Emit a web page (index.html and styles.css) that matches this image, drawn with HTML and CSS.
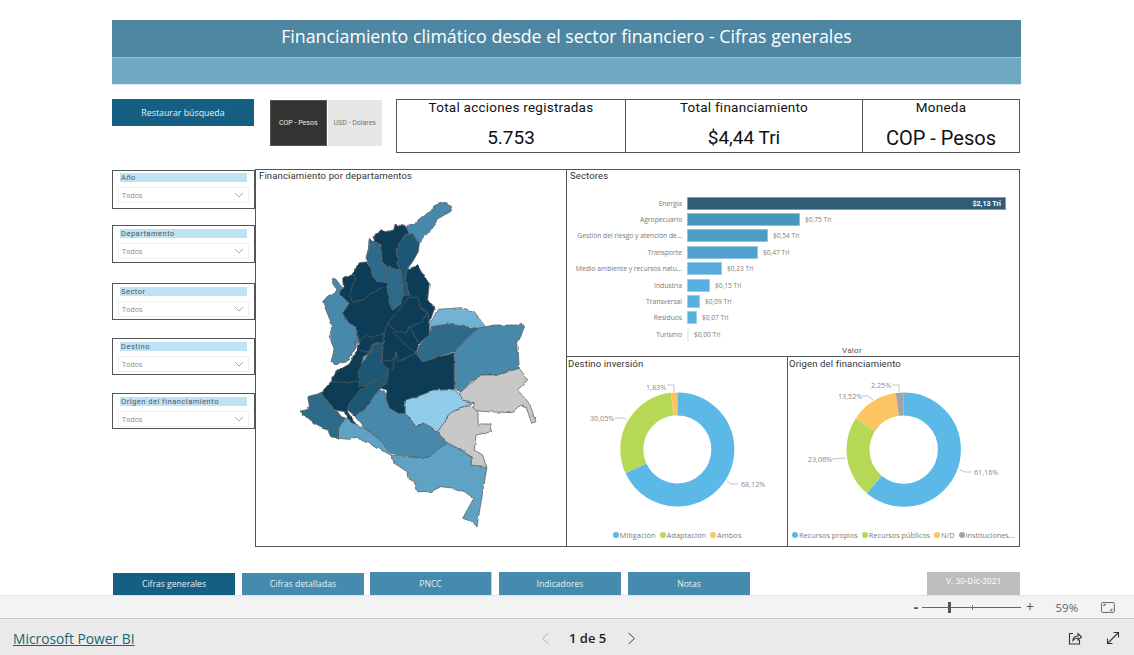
FILE: index.html
```html
<!DOCTYPE html>
<html lang="es">
<head>
<meta charset="utf-8">
<title>Financiamiento climático</title>
<link rel="stylesheet" href="styles.css">
</head>
<body>
<div class="report">
  <header class="banner">
    <h1 class="banner-title">Financiamiento climático desde el sector financiero - Cifras generales</h1>
    <div class="banner-sub"></div>
  </header>

  <section class="controls">
    <button class="reset">Restaurar búsqueda</button>
    <div class="toggle">
      <span class="toggle-on">COP - Pesos</span>
      <span class="toggle-off">USD - Dolares</span>
    </div>
    <div class="kpis">
      <div class="kpi kpi-a"><div class="kpi-label">Total acciones registradas</div><div class="kpi-value">5.753</div></div>
      <div class="kpi kpi-b"><div class="kpi-label">Total financiamiento</div><div class="kpi-value">$4,44 Tri</div></div>
      <div class="kpi kpi-c"><div class="kpi-label">Moneda</div><div class="kpi-value kpi-big">COP - Pesos</div></div>
    </div>
  </section>

  <main class="main">
    <aside class="slicers">
      <div class="slicer s1"><div class="slicer-head">Año</div><div class="slicer-box"><span>Todos</span><svg class="chev" width="10" height="6" viewBox="0 0 10 6"><polyline points="1,1 5,5 9,1"/></svg></div></div>
      <div class="slicer s2"><div class="slicer-head">Departamento</div><div class="slicer-box"><span>Todos</span><svg class="chev" width="10" height="6" viewBox="0 0 10 6"><polyline points="1,1 5,5 9,1"/></svg></div></div>
      <div class="slicer s3"><div class="slicer-head">Sector</div><div class="slicer-box"><span>Todos</span><svg class="chev" width="10" height="6" viewBox="0 0 10 6"><polyline points="1,1 5,5 9,1"/></svg></div></div>
      <div class="slicer s3"><div class="slicer-head">Destino</div><div class="slicer-box"><span>Todos</span><svg class="chev" width="10" height="6" viewBox="0 0 10 6"><polyline points="1,1 5,5 9,1"/></svg></div></div>
      <div class="slicer s4"><div class="slicer-head">Origen del financiamiento</div><div class="slicer-box"><span>Todos</span><svg class="chev" width="10" height="6" viewBox="0 0 10 6"><polyline points="1,1 5,5 9,1"/></svg></div></div>
    </aside>

    <div class="board">
      <section class="map-panel">
        <div class="panel-title">Financiamiento por departamentos</div>
        <svg class="map" viewBox="-75 15 933 1080" width="311" height="360">
          <defs>
            <filter id="rough" x="-5%" y="-5%" width="110%" height="110%">
              <feTurbulence type="fractalNoise" baseFrequency="0.05" numOctaves="2" seed="4"/>
              <feDisplacementMap in="SourceGraphic" scale="9" xChannelSelector="R" yChannelSelector="G"/>
            </filter>
          </defs>
          <g class="rough">
          <g class="dep">
            <polygon class="c-mid" points="373,140 400,128 430,105 455,90 458,78 485,68 510,78 515,92 490,105 468,118 462,135 440,160 415,190 400,170 385,160"/>
            <polygon class="c-mid" points="155,295 165,298 185,325 175,340 205,370 185,400 205,430 225,440 235,480 215,515 205,540 165,552 150,545 160,510 145,470 155,440 130,378 125,365 140,348 170,335 155,310"/>
            <polygon class="c-dark" points="280,165 303,148 312,155 338,150 342,133 373,140 385,160 372,165 345,210 350,238 345,242 358,270 320,262 303,245 300,195 280,190"/>
            <polygon class="c-dark" points="175,340 187,325 185,295 215,280 235,248 258,245 270,265 275,290 290,305 318,305 318,320 325,365 335,390 355,375 365,345 385,345 372,300 378,268 385,265 410,257 430,290 445,310 440,360 462,382 445,430 445,465 415,490 405,520 425,545 520,518 520,628 460,632 375,660 372,700 355,702 325,685 315,655 318,630 298,625 240,640 205,670 200,695 225,735 205,735 190,695 160,690 120,638 150,605 165,575 205,552 225,515 235,480 225,440 205,430 185,400 205,370"/>
            <polygon class="c-deep" points="372,165 395,160 400,172 415,190 412,215 395,245 378,268 372,300 385,345 368,345 358,270 345,242 350,238 345,210"/>
            <polygon class="c-steel" points="265,175 280,190 300,197 303,245 318,270 318,305 290,305 275,290 270,265 255,235 262,205"/>
            <polygon class="c-steel" points="303,245 320,262 358,270 368,345 355,375 335,390 325,365 318,320 318,270"/>
            <polygon class="c-pale" points="245,530 265,520 258,556 246,556"/>
            <polygon class="c-deep" points="232,570 250,545 275,495 308,487 303,545 325,572 300,595 262,610 235,620"/>
            <polygon class="c-deep" points="238,630 262,612 300,598 322,575 320,605 298,625 255,682 222,708 200,690 205,670"/>
            <polygon class="c-steel" points="450,440 500,432 590,445 555,478 520,515 425,545 405,520 420,488 445,465"/>
            <polygon class="c-sky" points="445,435 470,388 540,383 580,395 615,443 590,445 500,432 450,440"/>
            <polygon class="c-mid" points="590,445 640,435 700,435 725,430 730,445 710,490 715,565 650,585 600,585 570,605 540,635 520,628 520,518 555,478"/>
            <polygon class="c-light" points="373,660 410,650 460,630 520,630 540,645 545,660 582,668 540,682 510,695 495,720 490,735 468,755 430,728 405,740 385,715 373,700"/>
            <polygon class="c-gray" points="535,640 575,605 600,585 650,585 715,565 740,600 710,630 745,670 765,725 752,730 735,680 720,675 700,695 690,698 620,695 575,692 580,668 545,660"/>
            <polygon class="c-gray" points="470,755 495,720 510,695 540,682 570,678 590,695 592,732 625,732 632,755 585,765 580,810 605,825 617,860 570,855 570,830 530,805 495,785"/>
            <polygon class="c-pale" points="330,825 400,832 440,832 465,815 495,788 530,805 570,830 570,855 618,862 588,1038 565,1022 545,1015 578,955 550,935 520,925 480,920 450,935 410,935 400,905 380,895 378,875 340,850"/>
            <polygon class="c-mid" points="222,710 255,682 295,628 315,640 315,655 325,685 355,702 372,700 385,715 405,740 430,728 468,755 495,788 465,815 440,832 400,832 330,820 310,795 290,775 250,745"/>
            <polygon class="c-pale" points="172,745 190,715 200,715 222,735 250,745 290,775 310,795 330,825 270,795 225,772 205,778 172,775"/>
            <polygon class="c-steel" points="58,695 85,680 80,650 120,638 160,690 190,715 172,745 172,772 150,772 140,750 100,730"/>
          </g>
          <g class="borders">
            <polyline points="205,340 225,295 215,280"/>
            <polyline points="205,345 215,365 245,360 270,340 305,322"/>
            <polyline points="320,430 350,395 385,348 410,350 420,385 440,395 425,425 385,440 375,460 345,450 320,430"/>
            <polyline points="320,430 310,460 275,470 260,465 240,480 218,490 235,510 270,520 275,495 310,485 310,460"/>
            <polyline points="335,455 370,490 380,500 405,520"/>
            <polyline points="310,485 300,545 335,540 345,515 350,545 385,530 405,520"/>
            <polyline points="385,440 415,490"/>
            <polyline points="440,395 445,430"/>
            <polyline points="150,605 205,608 235,600"/>
            <polyline points="335,570 345,515"/>
            <polyline points="280,165 280,190"/>
          </g>
          </g>
        </svg>
      </section>

      <div class="right">
        <section class="sectors">
          <div class="panel-title">Sectores</div>
          <div class="bars">
            <div class="bar-row"><span class="bar-label">Energía</span><div class="bar-track"><div class="bar bar-1" style="width:319px"><span class="bar-in">$2,13 Tri</span></div></div></div>
            <div class="bar-row"><span class="bar-label">Agropecuario</span><div class="bar-track"><div class="bar bar-2" style="width:113px"></div><span class="bar-val">$0,75 Tri</span></div></div>
            <div class="bar-row"><span class="bar-label">Gestión del riesgo y atención de...</span><div class="bar-track"><div class="bar bar-3" style="width:81px"></div><span class="bar-val">$0,54 Tri</span></div></div>
            <div class="bar-row"><span class="bar-label">Transporte</span><div class="bar-track"><div class="bar bar-4" style="width:71px"></div><span class="bar-val">$0,47 Tri</span></div></div>
            <div class="bar-row"><span class="bar-label">Medio ambiente y recursos natu...</span><div class="bar-track"><div class="bar bar-5" style="width:35px"></div><span class="bar-val">$0,23 Tri</span></div></div>
            <div class="bar-row"><span class="bar-label">Industria</span><div class="bar-track"><div class="bar bar-6" style="width:23px"></div><span class="bar-val">$0,15 Tri</span></div></div>
            <div class="bar-row"><span class="bar-label">Transversal</span><div class="bar-track"><div class="bar bar-6" style="width:13px"></div><span class="bar-val">$0,09 Tri</span></div></div>
            <div class="bar-row"><span class="bar-label">Residuos</span><div class="bar-track"><div class="bar bar-6" style="width:10px"></div><span class="bar-val">$0,07 Tri</span></div></div>
            <div class="bar-row"><span class="bar-label">Turismo</span><div class="bar-track"><div class="bar bar-0" style="width:1px"></div><span class="bar-val">$0,00 Tri</span></div></div>
          </div>
          <div class="axis">Valor</div>
        </section>

        <div class="donuts">
          <section class="donut-panel donut-left">
            <div class="panel-title">Destino inversión</div>
            <svg class="donut" viewBox="567 372 220 155" width="220" height="155">
              <g class="ring" transform="rotate(-90 677.3 449.4)">
                <circle class="r-blue" cx="677.3" cy="449.4" r="45.5" pathLength="100" stroke-dasharray="68.12 100"/>
                <circle class="r-green" cx="677.3" cy="449.4" r="45.5" pathLength="100" stroke-dasharray="30.05 100" stroke-dashoffset="-68.12"/>
                <circle class="r-orange" cx="677.3" cy="449.4" r="45.5" pathLength="100" stroke-dasharray="1.83 100" stroke-dashoffset="-98.17"/>
              </g>
              <polyline class="lead" points="667,385 674,385 674,392"/>
              <polyline class="lead" points="615,418 624,418 627,420"/>
              <polyline class="lead" points="727,481 731,484 738,484"/>
              <text class="dl" x="646" y="390">1,83%</text>
              <text class="dl" x="590" y="421">30,05%</text>
              <text class="dl" x="741" y="487">68,12%</text>
            </svg>
            <div class="legend legend-c">
              <span class="lg"><i class="dot d-blue"></i>Mitigación</span>
              <span class="lg"><i class="dot d-green"></i>Adaptación</span>
              <span class="lg"><i class="dot d-orange"></i>Ambos</span>
            </div>
          </section>
          <section class="donut-panel">
            <div class="panel-title">Origen del financiamiento</div>
            <svg class="donut" viewBox="788 372 231 155" width="231" height="155">
              <g class="ring" transform="rotate(-90 903.7 449.6)">
                <circle class="r-blue" cx="903.7" cy="449.6" r="45.7" pathLength="100" stroke-dasharray="61.16 100"/>
                <circle class="r-green" cx="903.7" cy="449.6" r="45.7" pathLength="100" stroke-dasharray="23.06 100" stroke-dashoffset="-61.16"/>
                <circle class="r-orange" cx="903.7" cy="449.6" r="45.7" pathLength="100" stroke-dasharray="13.52 100" stroke-dashoffset="-84.22"/>
                <circle class="r-gray" cx="903.7" cy="449.6" r="45.7" pathLength="100" stroke-dasharray="2.26 100" stroke-dashoffset="-97.74"/>
              </g>
              <polyline class="lead" points="892,385 899,385 899,392"/>
              <polyline class="lead" points="862,396 868,396 873,400"/>
              <polyline class="lead" points="832,459 846,458"/>
              <polyline class="lead" points="960,470 965,472 972,472"/>
              <text class="dl" x="871" y="388">2,25%</text>
              <text class="dl" x="838" y="399">13,52%</text>
              <text class="dl" x="808" y="462">23,06%</text>
              <text class="dl" x="974" y="475">61,16%</text>
            </svg>
            <div class="legend">
              <span class="lg"><i class="dot d-blue"></i>Recursos propios</span>
              <span class="lg"><i class="dot d-green"></i>Recursos públicos</span>
              <span class="lg"><i class="dot d-orange"></i>N/D</span>
              <span class="lg"><i class="dot d-gray"></i>Instituciones...</span>
            </div>
          </section>
        </div>
      </div>
    </div>
  </main>

  <nav class="tabs">
    <a class="tab tab-active tab-low">Cifras generales</a>
    <a class="tab tab-low tab-2">Cifras detalladas</a>
    <a class="tab tab-3">PNCC</a>
    <a class="tab tab-4">Indicadores</a>
    <a class="tab tab-5">Notas</a>
    <span class="version">V. 30-Dic-2021</span>
  </nav>
</div>

<div class="zoombar">
  <span class="z-btn">-</span>
  <div class="slider"><i class="tick"></i><i class="thumb"></i></div>
  <span class="z-btn z-plus">+</span>
  <span class="z-pct">59%</span>
  <svg class="z-fit" width="14" height="11" viewBox="0 0 14 11"><rect x=".5" y=".5" width="13" height="10" rx="1"/><polyline points="3,4.5 3,2.5 5,2.5"/><polyline points="11,6.5 11,8.5 9,8.5"/></svg>
</div>

<footer class="footer">
  <a class="pbi">Microsoft Power BI</a>
  <div class="pager">
    <svg class="pg-arrow pg-off" width="9" height="13" viewBox="0 0 9 13"><polyline points="7.5,1 1.5,6.5 7.5,12"/></svg>
    <span class="pg-text">1 de 5</span>
    <svg class="pg-arrow pg-next" width="9" height="13" viewBox="0 0 9 13"><polyline points="1.5,1 7.5,6.5 1.5,12"/></svg>
  </div>
  <div class="f-icons">
    <svg class="f-ico" width="14" height="14" viewBox="0 0 14 14"><path d="M5 2.5H1.5V13H11.5V9"/><path d="M5 9.5C5 6.5 7 5 10 5V2.5L13.5 6L10 9V7C8 7 6 8 5 9.5Z"/></svg>
    <svg class="f-ico" width="14" height="14" viewBox="0 0 14 14"><path d="M1.5 12.5L12.5 1.5"/><path d="M7.5 1.5H12.5V6.5"/><path d="M1.5 7.5V12.5H6.5"/></svg>
  </div>
</footer>
</body>
</html>
```

FILE: styles.css
```css
* { box-sizing: border-box; }
html, body { margin: 0; padding: 0; }
body { width: 1134px; height: 655px; overflow: hidden; background: #fff; font-family: "Open Sans", "Liberation Sans", sans-serif; }

.report { height: 595px; padding: 20px 113px 0 112px; overflow: hidden; }

/* banner */
.banner { width: 909px; }
.banner-title { margin: 0; height: 37px; background: #4f87a2; color: #fff; font-weight: 400; font-size: 17.8px; line-height: 33px; text-align: center; }
.banner-sub { height: 28px; background: #72a9c2; border-top: 1px solid #9cc3d6; border-bottom: 1px solid #d4e4ec; }

/* controls */
.controls { display: flex; align-items: flex-start; margin-top: 14px; height: 54px; }
.reset { width: 142px; height: 27px; border: 0; padding: 0; background: #155f83; color: #e6f1f6; font-family: inherit; font-size: 8.8px; }
.toggle { display: flex; margin: 1px 0 0 16px; width: 112px; height: 46px; gap: 1px; }
.toggle span { flex: 1; display: flex; align-items: center; justify-content: center; font-size: 7px; font-family: "Roboto", sans-serif; white-space: nowrap; }
.toggle-on { background: #333; color: #f5ecd8; border: 1px solid #555; }
.toggle-off { background: #e6e6e6; color: #777; }
.kpis { display: flex; margin-left: 14px; width: 624px; height: 54px; border: 1px solid #555; font-family: "Roboto", sans-serif; color: #111; text-align: center; }
.kpi { height: 100%; }
.kpi-a { width: 229px; border-right: 1px solid #555; }
.kpi-b { width: 237px; border-right: 1px solid #555; }
.kpi-c { flex: 1; }
.kpi-label { font-size: 13.5px; letter-spacing: .25px; line-height: 15px; }
.kpi-value { font-size: 19px; line-height: 22px; margin-top: 12px; }
.kpi-big { font-size: 20px; }

/* main */
.main { display: flex; margin-top: 16px; height: 378px; }
.slicers { width: 143px; padding-top: 1px; }
.slicer { width: 143px; border: 1px solid #555; padding: 3px 5px 0 5px; }
.s1 { height: 39px; margin-bottom: 16px; padding-top: 2px; }
.s2 { height: 38px; margin-bottom: 20px; }
.s3 { height: 37px; margin-bottom: 18px; }
.s4 { height: 36px; }
.slicer-head { height: 9px; margin: 0 2px 0 2px; background: #bde3f5; font-family: "Roboto", sans-serif; font-size: 7.5px; line-height: 9px; letter-spacing: .5px; color: #555; padding-left: 1px; }
.slicer-box { display: flex; align-items: center; justify-content: space-between; height: 16px; margin-top: 5px; border: 1px solid #f0f0f0; padding: 0 4px 0 3px; font-size: 7.2px; color: #888; }
.chev { fill: none; stroke: #aaa; stroke-width: 1; }

.board { display: flex; width: 765px; height: 378px; border: 1px solid #555; }
.panel-title { font-family: "Roboto", sans-serif; font-size: 9.5px; line-height: 12px; letter-spacing: .15px; color: #333; padding-left: 3px; }
.map-panel { width: 311px; height: 376px; border-right: 1px solid #555; }
.map { display: block; margin-top: 3px; }
.rough { filter: url(#rough); }
.dep polygon { stroke: #5a5a5a; stroke-width: 2.2; stroke-linejoin: round; }
.borders polyline { fill: none; stroke: #5a5a5a; stroke-width: 2.2; }
.c-dark { fill: #0f3d57; }
.c-deep { fill: #1f5873; }
.c-steel { fill: #2d6a8a; }
.c-mid { fill: #4688ab; }
.c-pale { fill: #5fa2c4; }
.c-sky { fill: #72b2d4; }
.c-light { fill: #90cdea; }
.c-gray { fill: #c8c8c8; }

.right { flex: 1; display: flex; flex-direction: column; }
.sectors { height: 187px; border-bottom: 1px solid #555; }
.bars { padding-top: 13px; }
.bar-row { display: flex; align-items: center; height: 16.4px; }
.bar-label { width: 120px; padding-right: 5px; text-align: right; font-size: 6.8px; letter-spacing: -.05px; color: #7a7a7a; white-space: nowrap; overflow: hidden; }
.bar-track { flex: 1; display: flex; align-items: center; }
.bar { height: 13px; border: 1px solid rgba(255,255,255,.4); display: flex; align-items: center; justify-content: flex-end; flex: none; }
.bar-1 { background: #2f5d77; padding-right: 4px; }
.bar-2 { background: #4a95bc; }
.bar-3 { background: #4d9cc6; }
.bar-4 { background: #50a2cc; }
.bar-5 { background: #55acda; }
.bar-6 { background: #58b0e0; }
.bar-0 { background: #cfe6f2; }
.bar-in { font-size: 7.2px; font-weight: 700; color: #fff; font-family: "Roboto", sans-serif; }
.bar-val { margin-left: 5px; font-size: 6.6px; color: #7a7a7a; }
.axis { margin-top: 3px; text-align: center; font-family: "Roboto", sans-serif; font-size: 8px; line-height: 9px; letter-spacing: .3px; color: #555; padding-left: 117px; width: 453px; }

.donuts { flex: 1; display: flex; min-height: 0; }
.donut-panel { width: 231px; flex: none; }
.donut-left { width: 221px; border-right: 1px solid #555; }
.donut-panel .panel-title { height: 15px; padding-top: 1px; padding-left: 1px; }
.donut { display: block; }
.ring circle { fill: none; stroke-width: 23; }
.r-blue { stroke: #5cb8e6; }
.r-green { stroke: #b5d957; }
.r-orange { stroke: #fdc463; }
.r-gray { stroke: #a0a4a8; }
.lead { fill: none; stroke: #c4c4c4; stroke-width: 1; }
.dl { font-size: 7.2px; fill: #888; font-family: "Open Sans", sans-serif; }
.legend { display: flex; align-items: center; height: 16px; padding-left: 4px; gap: 4px; font-size: 7.3px; color: #7a7a7a; white-space: nowrap; }
.legend-c { justify-content: center; padding-left: 0; font-size: 7.5px; }
.lg { display: flex; align-items: center; gap: 1px; }
.dot { display: inline-block; width: 6px; height: 6px; border-radius: 50%; }
.d-blue { background: #5cb8e6; }
.d-green { background: #b5d957; }
.d-orange { background: #fdc463; }
.d-gray { background: #a0a4a8; }

/* tabs */
.tabs { display: flex; align-items: flex-end; height: 48px; padding-left: 1px; }
.tab { display: flex; align-items: center; justify-content: center; width: 122px; height: 23px; background: #458bad; color: #e2f1f8; font-size: 8.6px; }
.tab-low { height: 22px; }
.tab-active { background: #155f83; }
.tab-2 { margin-left: 7px; }
.tab-3 { margin-left: 6px; width: 122px; border-right: 1px solid #b6d2e0; }
.tab-4 { margin-left: 7px; }
.tab-5 { margin-left: 7px; }
.version { display: flex; justify-content: center; padding-top: 3px; margin-left: 177px; width: 93px; height: 23px; background: #bdbdbd; color: #f2f2f2; font-size: 8.2px; font-weight: 600; }

/* zoom bar */
.zoombar { display: flex; align-items: center; height: 23px; background: #f3f3f3; border-top: 1px solid #e2e2e2; padding: 0 19px 0 913px; color: #555; }
.z-btn { width: 6px; font-size: 14px; line-height: 1; font-weight: 700; text-align: center; }
.z-plus { margin-left: 5px; width: 9px; font-weight: 400; }
.slider { position: relative; width: 100px; height: 1px; margin-left: 3px; background: #666; }
.thumb { position: absolute; left: 26px; top: -5px; width: 3px; height: 11px; background: #555; }
.tick { position: absolute; left: 50px; top: -2px; width: 1px; height: 5px; background: #777; }
.z-pct { margin-left: 21px; width: 23px; font-size: 11.5px; color: #666; }
.z-fit { margin-left: 23px; fill: none; stroke: #666; stroke-width: 1; }

/* footer */
.footer { display: grid; grid-template-columns: 528px auto 1fr; align-items: center; height: 37px; background: #eaeaea; border-top: 1px solid #c9c9c9; padding: 2px 14px 0 13px; }
.pbi { font-size: 13.8px; color: #17666d; text-decoration: underline; }
.pager { display: flex; align-items: center; gap: 19px; }
.pg-arrow { fill: none; stroke: #444; stroke-width: 1; }
.pg-off { stroke: #b5b5b5; }
.pg-next { margin-left: 2px; }
.pg-text { font-size: 13px; font-weight: 600; color: #222; }
.f-icons { display: flex; justify-content: flex-end; gap: 24px; }
.f-ico { fill: none; stroke: #333; stroke-width: 1.1; }
```
